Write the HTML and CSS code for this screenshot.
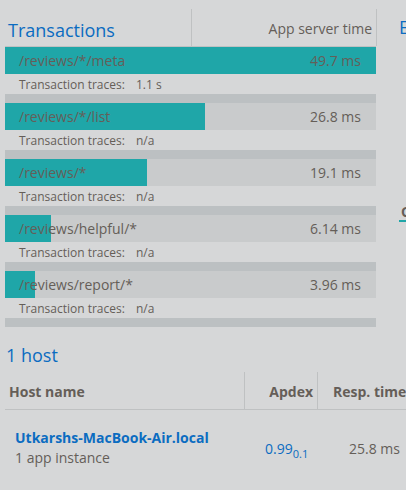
FILE: index.html
```html
<!DOCTYPE html>
<html>
<head>
<meta charset="utf-8">
<link rel="stylesheet" href="styles.css">
</head>
<body>
<div class="page">
  <div class="top">
    <div class="txn-panel">
      <div class="txn-head">
        <div class="txn-title">Transactions</div>
        <div class="txn-col">App server time</div>
      </div>
      <div class="txn">
        <div class="bar"><div class="fill" style="width:371px"></div><span class="name">/reviews/*/meta</span><span class="val">49.7 ms</span></div>
        <div class="traces"><span class="tl">Transaction traces:</span><span class="tv">1.1 s</span></div>
      </div>
      <div class="sep"></div>
      <div class="txn">
        <div class="bar"><div class="fill" style="width:200px"></div><span class="name">/reviews/*/list</span><span class="val">26.8 ms</span></div>
        <div class="traces"><span class="tl">Transaction traces:</span><span class="tv">n/a</span></div>
      </div>
      <div class="sep"></div>
      <div class="txn">
        <div class="bar"><div class="fill" style="width:142px"></div><span class="name">/reviews/*</span><span class="val">19.1 ms</span></div>
        <div class="traces"><span class="tl">Transaction traces:</span><span class="tv">n/a</span></div>
      </div>
      <div class="sep"></div>
      <div class="txn">
        <div class="bar"><div class="fill" style="width:46px"></div><span class="name">/reviews/helpful/*</span><span class="val">6.14 ms</span></div>
        <div class="traces"><span class="tl">Transaction traces:</span><span class="tv">n/a</span></div>
      </div>
      <div class="sep"></div>
      <div class="txn">
        <div class="bar"><div class="fill" style="width:30px"></div><span class="name">/reviews/report/*</span><span class="val">3.96 ms</span></div>
        <div class="traces"><span class="tl">Transaction traces:</span><span class="tv">n/a</span></div>
      </div>
      <div class="sep"></div>
    </div>
    <div class="side">
      <div class="side-title">E</div>
      <div class="side-tab">O</div>
    </div>
  </div>
  <div class="hosts">
    <div class="hosts-title">1 host</div>
    <div class="htable">
      <div class="hrow hhead">
        <div class="c1">Host name</div>
        <div class="c2">Apdex</div>
        <div class="c3">Resp. time</div>
      </div>
      <div class="hrow hbody">
        <div class="c1"><div class="hname">Utkarshs-MacBook-Air.local</div><div class="hsub">1 app instance</div></div>
        <div class="c2"><span class="apdex">0.99<sub>0.1</sub></span></div>
        <div class="c3">25.8 ms</div>
      </div>
    </div>
  </div>
</div>
</body>
</html>
```
FILE: styles.css
```css
html, body {
  margin: 0;
  padding: 0;
  background: #d6d7d8;
  overflow: hidden;
}
body {
  width: 406px;
  height: 490px;
  font-family: "Open Sans", "Noto Sans", sans-serif;
  color: #655e58;
}
.page {
  width: 406px;
}
.top {
  display: flex;
  align-items: flex-start;
}
.txn-panel {
  margin-left: 5px;
  width: 371px;
  flex: none;
}
.txn-head {
  display: flex;
  height: 37px;
  margin-top: 9px;
  border-bottom: 1px solid #bfc1c2;
}
.txn-title {
  width: 183px;
  padding-left: 3px;
  border-right: 1px solid #bfc1c2;
  color: #0b6cc1;
  font-size: 18px;
  line-height: 24px;
  padding-top: 9px;
  box-sizing: content-box;
}
.txn-col {
  flex: 1;
  text-align: right;
  padding-right: 4px;
  border-right: 1px solid #bfc1c2;
  font-size: 14px;
  line-height: 18px;
  padding-top: 11px;
  margin-right: -1px;
}
.bar {
  position: relative;
  height: 27px;
  background: #c9cbcc;
  display: flex;
  align-items: center;
  justify-content: space-between;
  padding: 0 15px 0 14px;
  font-size: 14px;
}
.fill {
  position: absolute;
  left: 0;
  top: 0;
  bottom: 0;
  background: #1fa6a8;
}
.name, .val {
  position: relative;
}
.traces {
  height: 20px;
  display: flex;
  align-items: center;
  padding-left: 14px;
  font-size: 12px;
}
.tl {
  margin-right: 11px;
}
.sep {
  height: 9px;
  background: #bcc0c2;
}
.side {
  margin-left: 23px;
  white-space: nowrap;
}
.side-title {
  color: #0b6cc1;
  font-size: 18px;
  line-height: 24px;
  margin-top: 15px;
}
.side-tab {
  display: inline-block;
  margin-top: 165px;
  font-size: 14px;
  font-weight: 700;
  line-height: 16px;
  padding-left: 2px;
  border-bottom: 2px solid #1fa6a8;
  color: #655e58;
}
.hosts {
  margin-top: 16px;
}
.hosts-title {
  margin-left: 6px;
  color: #0b6cc1;
  font-size: 18px;
  line-height: 24px;
}
.htable {
  margin-left: 5px;
  margin-top: 5px;
  width: 420px;
}
.hrow {
  display: flex;
}
.hhead {
  height: 37px;
  border-bottom: 1px solid #bfc1c2;
  font-weight: 700;
  font-size: 14px;
}
.hhead > div {
  padding-top: 10px;
  box-sizing: border-box;
}
.c1 {
  width: 240px;
  padding-left: 4px;
  border-right: 1px solid #bfc1c2;
  box-sizing: border-box;
}
.c2 {
  width: 73px;
  text-align: right;
  padding-right: 4px;
  border-right: 1px solid #bfc1c2;
  box-sizing: border-box;
}
.c3 {
  flex: 1;
  padding-left: 15px;
}
.hbody {
  height: 80px;
  border-bottom: 1px solid #bfc1c2;
  font-size: 14px;
}
.hbody > div {
  border-right: none;
}
.hbody .c1 {
  padding-left: 10px;
  padding-top: 18px;
}
.hname {
  color: #0b6cc1;
  font-weight: 700;
  line-height: 20px;
}
.hsub {
  line-height: 20px;
}
.hbody .c2 {
  padding-top: 29px;
  text-align: left;
  padding-left: 20px;
}
.apdex {
  color: #0b6cc1;
}
.apdex sub {
  font-size: 11px;
}
.hbody .c3 {
  padding-top: 29px;
  padding-left: 31px;
}
```
